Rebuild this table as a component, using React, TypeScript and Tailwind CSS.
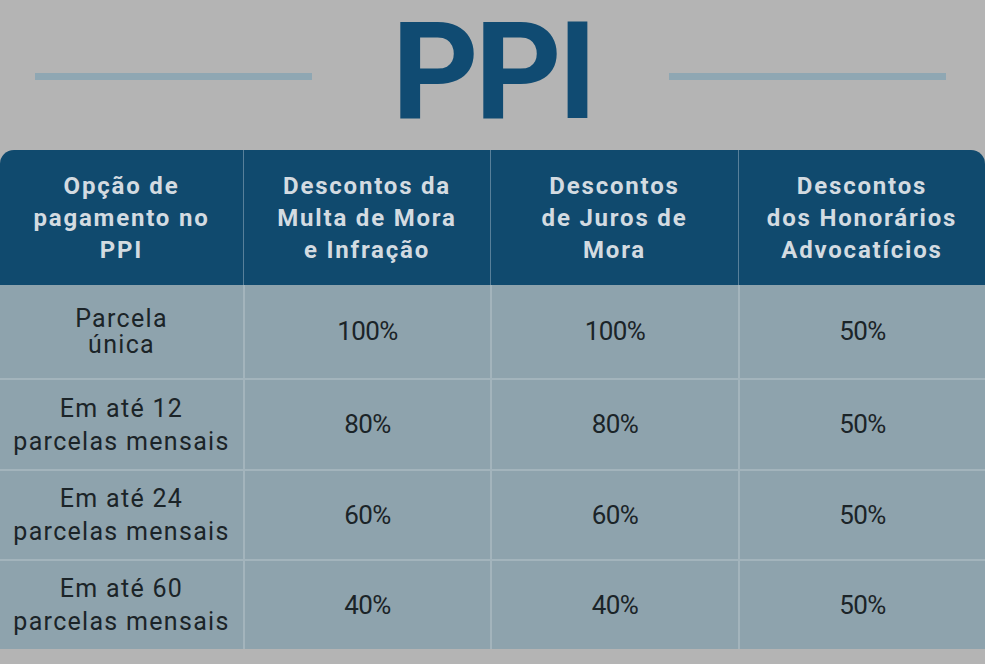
const headers = [
  ['Opção de', 'pagamento no', 'PPI'],
  ['Descontos da', 'Multa de Mora', 'e Infração'],
  ['Descontos', 'de Juros de', 'Mora'],
  ['Descontos', 'dos Honorários', 'Advocatícios'],
];

const rows = [
  { label: ['Parcela', 'única'], tight: true, h: 'h-[93px]', values: ['100%', '100%', '50%'] },
  { label: ['Em até 12', 'parcelas mensais'], tight: false, h: 'h-[91px]', values: ['80%', '80%', '50%'] },
  { label: ['Em até 24', 'parcelas mensais'], tight: false, h: 'h-[90px]', values: ['60%', '60%', '50%'] },
  { label: ['Em até 60', 'parcelas mensais'], tight: false, h: 'h-[90px]', values: ['40%', '40%', '50%'] },
];

const cols = 'grid grid-cols-[243px_247px_248px_247px]';

export default function App() {
  return (
    <div
      className="w-[985px] h-[664px] bg-[#b4b4b4] flex flex-col overflow-hidden"
      style={{ fontFamily: 'Roboto, "Liberation Sans", sans-serif' }}
    >
      {/* Title */}
      <div className="h-[150px] flex items-start">
        <div className="ml-[35px] mt-[73px] w-[277px] h-[7px] bg-[#8fa7b3]" />
        <div className="flex-1 flex justify-center">
          <span className="mt-[2px] pl-[4px] text-[135px] leading-[140px] font-bold text-[#104b72] tracking-[-4px]">
            PPI
          </span>
        </div>
        <div className="mr-[39px] mt-[73px] w-[277px] h-[7px] bg-[#8fa7b3]" />
      </div>

      {/* Header */}
      <div className={`${cols} h-[135px] bg-[#104a6e] rounded-t-[14px]`}>
        {headers.map((lines, i) => (
          <div
            key={i}
            className={`flex flex-col items-center justify-center text-[24px] leading-[32px] font-bold text-[#d3dbe1] tracking-[1.8px] ${
              i > 0 ? 'border-l border-[#58809a]' : ''
            }`}
          >
            {lines.map((l) => (
              <span key={l}>{l}</span>
            ))}
          </div>
        ))}
      </div>

      {/* Body */}
      <div className="bg-[#8ea3ad]">
        {rows.map((row, r) => (
          <div key={r} className={`${cols} ${row.h} ${r > 0 ? 'border-t-2 border-[#a3b4bc]' : ''}`}>
            <div
              className={`flex flex-col items-center justify-center text-[25px] text-[#1b2428] tracking-[1.3px] ${
                row.tight ? 'leading-[26px]' : 'leading-[33px]'
              }`}
            >
              {row.label.map((l) => (
                <span key={l}>{l}</span>
              ))}
            </div>
            {row.values.map((v, i) => (
              <div
                key={i}
                className="flex items-center justify-center border-l-2 border-[#a3b4bc] text-[26px] text-[#1b2428] tracking-[-0.6px]"
              >
                {v}
              </div>
            ))}
          </div>
        ))}
      </div>
    </div>
  );
}
